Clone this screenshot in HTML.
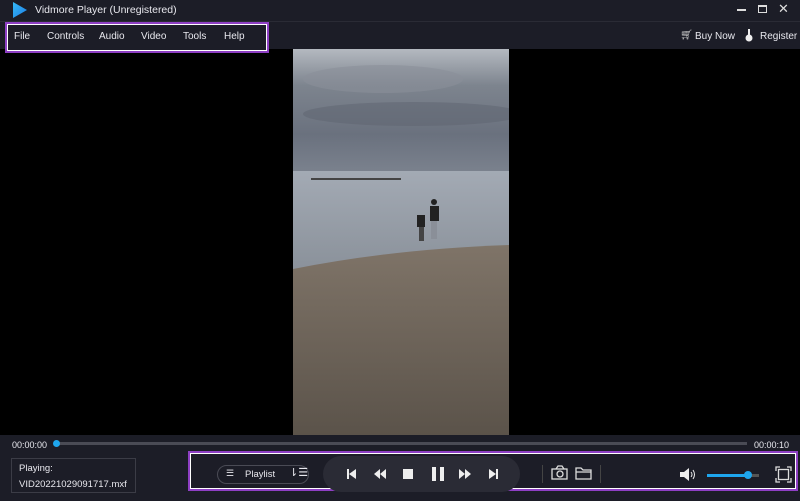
<!DOCTYPE html>
<html><head><style>
*{margin:0;padding:0;box-sizing:border-box}
body{width:800px;height:501px;background:#1c1d27;font-family:"Liberation Sans",sans-serif;color:#e8e8ee;position:relative;overflow:hidden;font-size:10px}
.a{position:absolute}
</style></head><body>
<svg class="a" style="left:12px;top:2px" width="16" height="16"><defs><linearGradient id="g" x1="0" y1="0" x2="1" y2="1"><stop offset="0" stop-color="#35b9f5"/><stop offset="1" stop-color="#1e7ee6"/></linearGradient></defs><polygon points="1,0 15,8 1,16" fill="url(#g)"/></svg>
<div class="a" style="left:35px;top:4px;font-size:10.5px">Vidmore Player (Unregistered)</div>
<div class="a" style="left:737px;top:9px;width:9px;height:1.5px;background:#ddd"></div>
<div class="a" style="left:758px;top:5px;width:9px;height:8px;border:1.5px solid #ddd;border-top-width:2px"></div>
<div class="a" style="left:778px;top:1px;font-size:13px;color:#ddd">✕</div>
<div class="a" style="left:0;top:21px;width:800px;height:1px;background:#2a2b35"></div>
<div class="a" style="left:0;top:49px;width:800px;height:386px;background:#000"></div>
<div class="a" style="left:5px;top:22px;width:264px;height:31px;border:2px solid #8e3fc4;outline:1px solid #fff;outline-offset:-3px;background:#1c1d27"></div>
<div class="a" style="left:14px;top:31px">File</div>
<div class="a" style="left:47px;top:31px">Controls</div>
<div class="a" style="left:99px;top:31px">Audio</div>
<div class="a" style="left:141px;top:31px">Video</div>
<div class="a" style="left:183px;top:31px">Tools</div>
<div class="a" style="left:224px;top:31px">Help</div>
<div class="a" style="left:680px;top:30px;font-size:10px;color:#ccc">🛒︎</div>
<div class="a" style="left:695px;top:31px">Buy Now</div>
<svg class="a" style="left:745px;top:29px" width="8" height="13"><rect x="3" y="0" width="2" height="6" fill="#eee"/><circle cx="4" cy="9" r="3.5" fill="#eee"/></svg>
<div class="a" style="left:760px;top:31px">Register</div>
<svg class="a" style="left:293px;top:49px" width="216" height="386">
<defs>
<linearGradient id="sky" x1="0" y1="0" x2="0" y2="1"><stop offset="0" stop-color="#b4b9c0"/><stop offset=".3" stop-color="#7d848e"/><stop offset=".7" stop-color="#6a717e"/><stop offset="1" stop-color="#7a818d"/></linearGradient>
<linearGradient id="sea" x1="0" y1="0" x2="0" y2="1"><stop offset="0" stop-color="#a3aab4"/><stop offset="1" stop-color="#8a919a"/></linearGradient>
<linearGradient id="sand" x1="0" y1="0" x2="0" y2="1"><stop offset="0" stop-color="#7f7468"/><stop offset="1" stop-color="#5b534a"/></linearGradient>
</defs>
<rect width="216" height="122" fill="url(#sky)"/>
<ellipse cx="90" cy="30" rx="80" ry="14" fill="#8a9099" opacity=".6"/>
<ellipse cx="120" cy="65" rx="110" ry="12" fill="#5d6470" opacity=".5"/>
<rect y="122" width="216" height="100" fill="url(#sea)"/>
<rect x="18" y="129" width="90" height="2" fill="#444"/>
<path d="M0,220 Q100,200 216,196 L216,386 L0,386 Z" fill="url(#sand)"/>
<rect x="137" y="157" width="9" height="15" fill="#222"/><circle cx="141" cy="153" r="3" fill="#222"/>
<rect x="138" y="172" width="6" height="18" fill="#8a8f98"/>
<rect x="124" y="166" width="8" height="12" fill="#222"/>
<rect x="126" y="178" width="5" height="14" fill="#444"/>
</svg>
<div class="a" style="left:12px;top:440px;font-size:9px">00:00:00</div>
<div class="a" style="left:56px;top:442px;width:691px;height:3px;background:#4a4b55"></div>
<div class="a" style="left:53px;top:440px;width:7px;height:7px;border-radius:50%;background:#1ea6ee"></div>
<div class="a" style="left:754px;top:440px;font-size:9px">00:00:10</div>
<div class="a" style="left:11px;top:458px;width:125px;height:35px;border:1px solid #3b3c46"></div>
<div class="a" style="left:19px;top:463px;font-size:9.5px">Playing:</div>
<div class="a" style="left:19px;top:479px;font-size:9.5px">VID20221029091717.mxf</div>
<div class="a" style="left:188px;top:451px;width:610px;height:40px;border:2px solid #8e3fc4;outline:1px solid #fff;outline-offset:-3px"></div>
<div class="a" style="left:217px;top:465px;width:92px;height:19px;border:1px solid #4a4b55;border-radius:10px"></div>
<div class="a" style="left:226px;top:468px;font-size:9px">☰</div>
<div class="a" style="left:245px;top:469px;font-size:9.5px">Playlist</div>
<div class="a" style="left:289px;top:466px;font-size:11px">⇂☰</div>
<div class="a" style="left:323px;top:456px;width:197px;height:36px;background:#2a2b35;border-radius:18px"></div>
<svg class="a" style="left:345px;top:467px" width="160" height="14" fill="#eee">
<rect x="2" y="2" width="2" height="10"/><polygon points="11,2 4,7 11,12"/>
<polygon points="35,2 29,7 35,12"/><polygon points="41,2 35,7 41,12"/>
<rect x="58" y="2" width="10" height="10"/>
<rect x="87" y="0" width="4" height="14"/><rect x="95" y="0" width="4" height="14"/>
<polygon points="114,2 120,7 114,12"/><polygon points="120,2 126,7 120,12"/>
<polygon points="144,2 151,7 144,12"/><rect x="151" y="2" width="2" height="10"/>
</svg>
<div class="a" style="left:542px;top:465px;width:1px;height:18px;background:#444"></div>
<svg class="a" style="left:551px;top:465px" width="45" height="16" fill="none" stroke="#ddd" stroke-width="1.3">
<rect x="1" y="4" width="15" height="10"/><circle cx="9" cy="9" r="3"/><path d="M5,4 L7,1 L11,1 L13,4"/>
<path d="M25,3 L30,3 L32,5 L40,5 L40,14 L25,14 Z M25,7 L40,7"/>
</svg>
<div class="a" style="left:600px;top:465px;width:1px;height:18px;background:#444"></div>
<svg class="a" style="left:679px;top:467px" width="18" height="15"><polygon points="1,5 5,5 10,1 10,14 5,10 1,10" fill="#eee"/><path d="M12,5 Q14,7.5 12,10 M14,3 Q17,7.5 14,12" stroke="#eee" fill="none"/></svg>
<div class="a" style="left:707px;top:474px;width:52px;height:3px;background:#555"></div>
<div class="a" style="left:707px;top:474px;width:41px;height:3px;background:#1ea6ee"></div>
<div class="a" style="left:744px;top:471px;width:8px;height:8px;border-radius:50%;background:#1ea6ee"></div>
<svg class="a" style="left:775px;top:466px" width="17" height="17" fill="none" stroke="#ddd" stroke-width="1.3"><path d="M1,5 V1 H5 M12,1 H16 V5 M16,12 V16 H12 M5,16 H1 V12"/><rect x="3.5" y="3.5" width="10" height="10"/></svg>
</body></html>
